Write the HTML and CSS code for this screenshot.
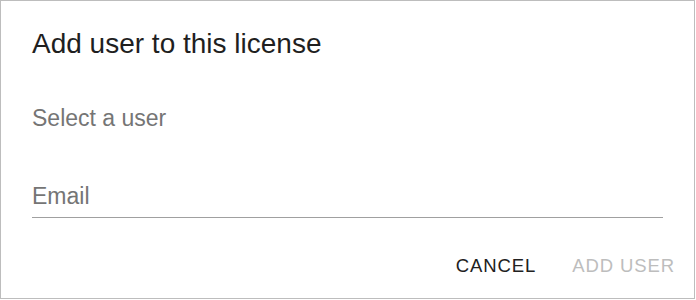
FILE: index.html
```html
<!DOCTYPE html>
<html>
<head>
<meta charset="utf-8">
<link rel="stylesheet" href="styles.css">
</head>
<body>
<div class="dialog">
  <h2 class="title">Add user to this license</h2>
  <div class="subtitle">Select a user</div>
  <div class="field">
    <span class="label">Email</span>
  </div>
  <div class="actions">
    <button class="btn btn-cancel">CANCEL</button>
    <button class="btn btn-add" disabled>ADD USER</button>
  </div>
</div>
</body>
</html>
```
FILE: styles.css
```css
html, body {
  margin: 0;
  padding: 0;
  background: #ffffff;
}
body {
  font-family: "Liberation Sans", Arial, sans-serif;
}
.dialog {
  width: 695px;
  height: 299px;
  box-sizing: border-box;
  border: 1px solid #bdbdbd;
  padding: 27px 31px 0 31px;
  display: flex;
  flex-direction: column;
}
.title {
  margin: 0;
  font-size: 28px;
  line-height: 32px;
  font-weight: 400;
  color: #1f1f1f;
}
.subtitle {
  margin-top: 46px;
  font-size: 23px;
  line-height: 24px;
  color: #757575;
}
.field {
  margin-top: 54px;
  padding-bottom: 9px;
  border-bottom: 1px solid #a0a0a0;
}
.label {
  display: block;
  font-size: 23px;
  line-height: 24px;
  color: #757575;
}
.actions {
  margin: 36px -31px 0 -31px;
  padding-right: 11px;
  display: flex;
  justify-content: flex-end;
  gap: 20px;
}
.btn {
  font-family: "Liberation Sans", Arial, sans-serif;
  font-size: 18.5px;
  line-height: 24px;
  letter-spacing: 0.9px;
  padding: 0 8px;
  margin: 0;
  border: none;
  background: transparent;
}
.btn-cancel {
  color: #212121;
}
.btn-add {
  color: #bdbdbd;
}
```
